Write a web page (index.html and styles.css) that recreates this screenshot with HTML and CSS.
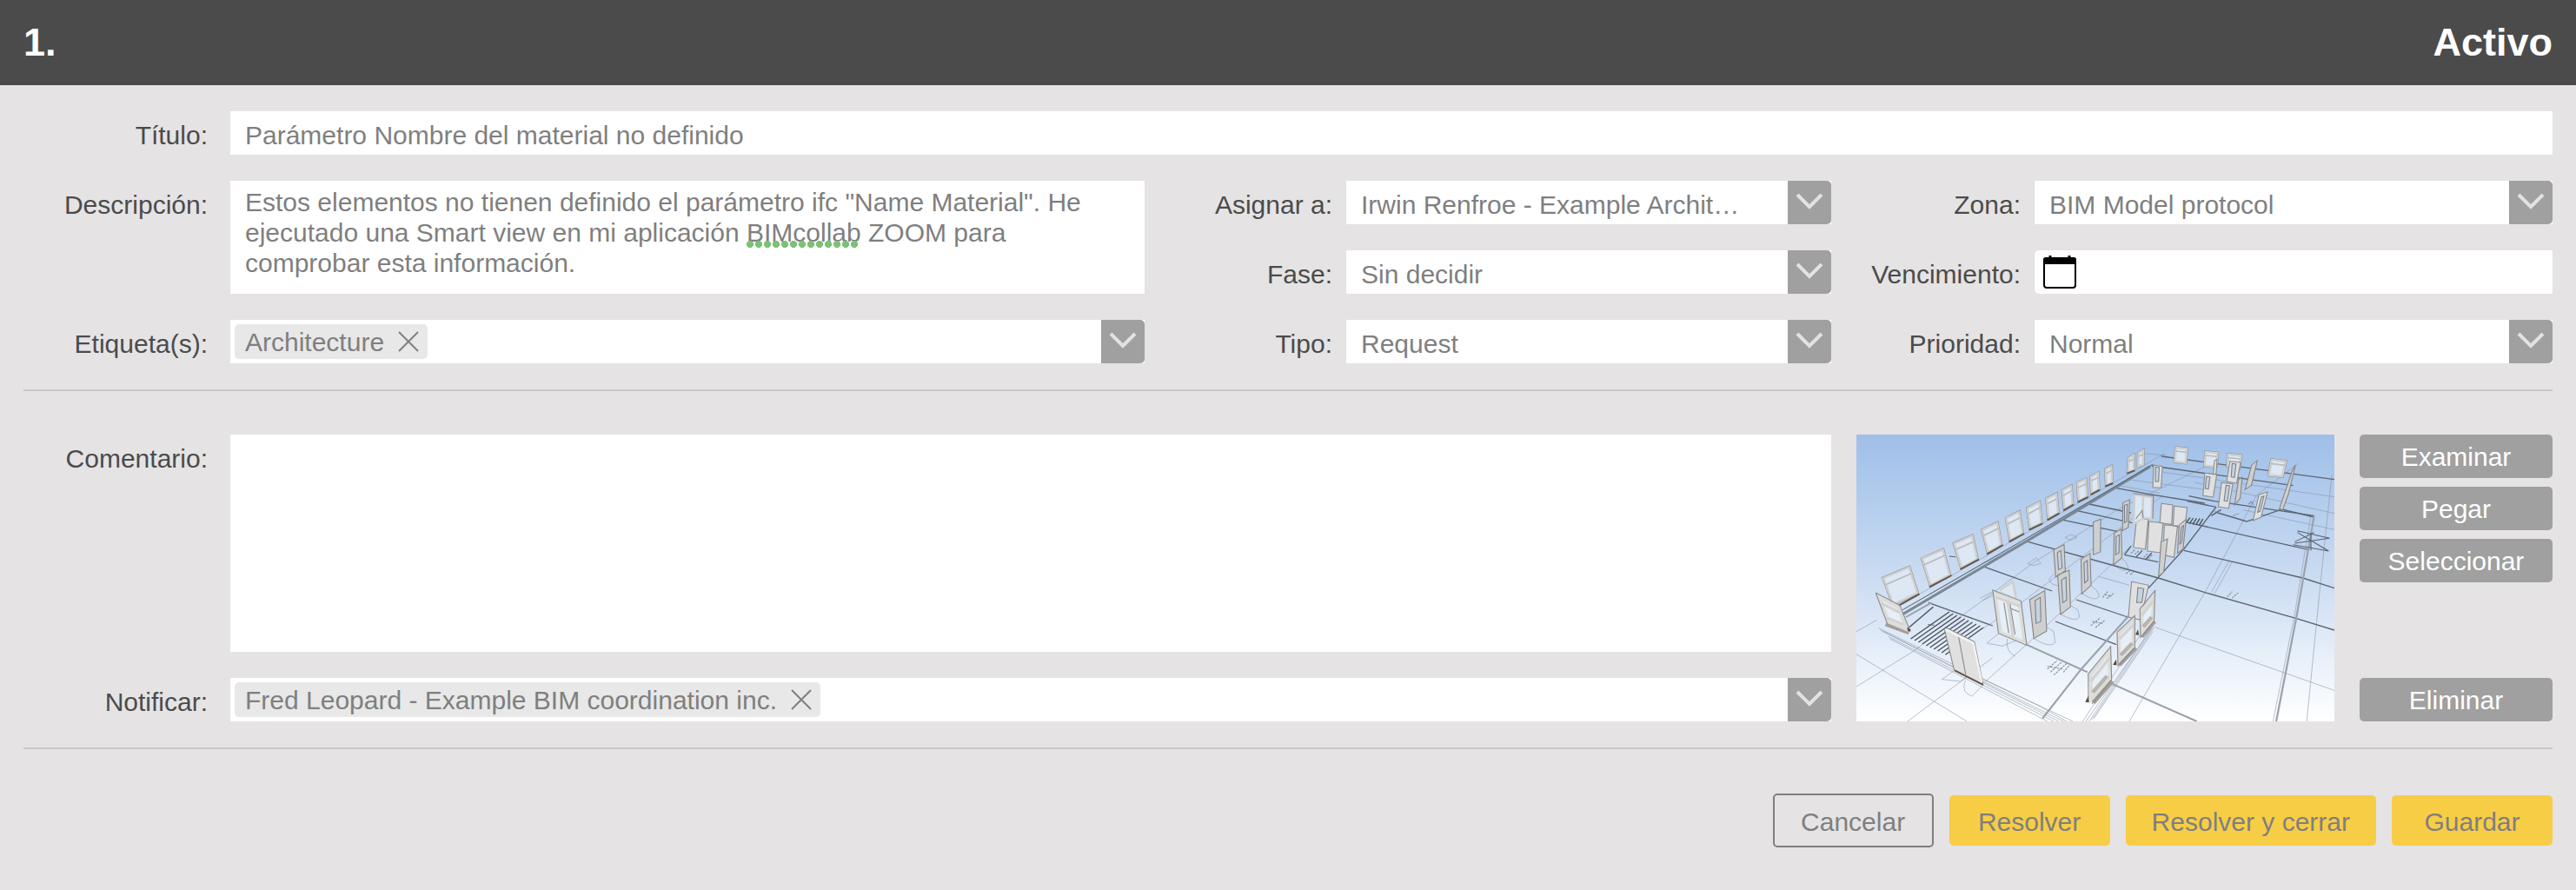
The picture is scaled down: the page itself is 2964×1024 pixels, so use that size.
FILE: index.html
```html
<!DOCTYPE html>
<html lang="es">
<head>
    <meta charset="UTF-8">
    <meta name="viewport" content="width=device-width, initial-scale=1.0">
    <title>Incidencia 1</title>
    <link rel="stylesheet" href="styles.css">
</head>
<body>

<svg class="defs" aria-hidden="true">
    <symbol id="chevron" viewBox="0 0 50 50">
        <path d="M11 16 L25 30 L39 16" fill="none" stroke="#e2e2e2" stroke-width="4"/>
    </symbol>
    <symbol id="cross" viewBox="0 0 24 24">
        <path d="M1 1 L23 23 M23 1 L1 23" fill="none" stroke="#7f7f7f" stroke-width="2"/>
    </symbol>
</svg>

<header class="header">
    <h1>1.</h1>
    <span class="status">Activo</span>
</header>

<form class="issue">
    <div class="fields">
        <label class="label label-first" for="title">Título:</label>
        <input class="input title" type="text" id="title" value="Parámetro Nombre del material no definido">

        <label class="label label-first" for="description">Descripción:</label>
        <div class="description">
            <textarea class="textarea" id="description" spellcheck="false">Estos elementos no tienen definido el parámetro ifc "Name Material". He ejecutado una Smart view en mi aplicación BIMcollab ZOOM para comprobar esta información.</textarea>
            <span class="spelling"></span>
        </div>

        <label class="label" for="assigned">Asignar a:</label>
        <div class="select">
            <select id="assigned"><option>Irwin Renfroe - Example Archit…</option></select>
            <svg class="arrow"><use href="#chevron"/></svg>
        </div>

        <label class="label" for="area">Zona:</label>
        <div class="select">
            <select id="area"><option>BIM Model protocol</option></select>
            <svg class="arrow"><use href="#chevron"/></svg>
        </div>

        <label class="label" for="phase">Fase:</label>
        <div class="select">
            <select id="phase"><option>Sin decidir</option></select>
            <svg class="arrow"><use href="#chevron"/></svg>
        </div>

        <label class="label" for="deadline">Vencimiento:</label>
        <div class="date">
            <button type="button" class="calendar" aria-label="Calendario">
                <svg viewBox="0 0 38 38" width="38" height="38">
                    <path d="M8 0 V4 M30 0 V4" stroke="#000" stroke-width="3"/>
                    <rect x="1" y="3" width="36" height="34" rx="3" fill="#fff" stroke="#000" stroke-width="2"/>
                    <path d="M0 10 V5 Q0 2 3 2 H35 Q38 2 38 5 V10 Z"/>
                </svg>
            </button>
            <input class="input" type="text" id="deadline">
        </div>

        <label class="label label-first" for="tags">Etiqueta(s):</label>
        <div class="tags">
            <span class="tag">Architecture <button type="button" aria-label="Quitar"><svg><use href="#cross"/></svg></button></span>
            <input type="text" id="tags">
            <button type="button" class="open" aria-label="Abrir"><svg class="arrow"><use href="#chevron"/></svg></button>
        </div>

        <label class="label" for="type">Tipo:</label>
        <div class="select">
            <select id="type"><option>Request</option></select>
            <svg class="arrow"><use href="#chevron"/></svg>
        </div>

        <label class="label" for="priority">Prioridad:</label>
        <div class="select">
            <select id="priority"><option>Normal</option></select>
            <svg class="arrow"><use href="#chevron"/></svg>
        </div>
    </div>

    <div class="comment">
        <div class="comment-fields">
            <label class="label label-first" for="comment">Comentario:</label>
            <textarea class="textarea comment-text" id="comment"></textarea>

            <label class="label label-first" for="notify">Notificar:</label>
            <div class="tags">
                <span class="tag">Fred Leopard - Example BIM coordination inc. <button type="button" aria-label="Quitar"><svg><use href="#cross"/></svg></button></span>
                <input type="text" id="notify">
                <button type="button" class="open" aria-label="Abrir"><svg class="arrow"><use href="#chevron"/></svg></button>
            </div>
        </div>

        <svg class="snapshot" viewBox="46 60 1487 990" preserveAspectRatio="none">
            <defs>
                <linearGradient id="sky" x1="0" y1="0" x2="0" y2="1">
                    <stop offset="0" stop-color="#a0bfe7"/>
                    <stop offset="0.12" stop-color="#a9c6eb"/>
                    <stop offset="0.5" stop-color="#cbdcf2"/>
                    <stop offset="0.8" stop-color="#eaf1fa"/>
                    <stop offset="1" stop-color="#fff"/>
                </linearGradient>
                <path id="frames" d="M130 555 L210 518 L236 607 L160 647 Z M251 488 L315 457 L336 544 L277 580 Z M350 436 L406 409 L422 490 L373 519 Z M438 389 L484 365 L496 440 L456 467 Z M513 349 L552 327 L563 401 L525 424 Z M578 315 L615 294 L621 365 L587 383 Z M638 282 L668 265 L673 331 L644 349 Z M688 253 L714 238 L718 300 L694 317 Z M734 227 L759 215 L763 274 L738 289 Z M776 206 L797 193 L800 249 L778 263 Z M822 180 L839 170 L841 226 L824 234 Z M894 141 L908 131 L909 181 L891 190 Z M924 124 L938 115 L938 163 L923 168 Z M1041 105 L1074 109 L1070 158 L1037 153 Z M1133 120 L1169 124 L1165 171 L1130 167 Z M1203 129 L1242 133 L1237 176 L1201 169 Z M1338 147 L1381 153 L1371 204 L1330 200 Z"/>
            </defs>
            <rect x="46" y="60" width="1487" height="990" fill="url(#sky)"/>

            <!-- plano -->
            <g class="plan-light">
                <path d="M46 740 L110 700 M240 612 L1005 125 M46 818 L390 1050 M46 930 L220 810 L430 640 L600 500 L860 318 L1140 165"/>
                <path d="M205 1050 L470 830 M445 915 L575 785 L905 440 M440 730 L560 640 L1000 270"/>
                <path d="M975 725 L1533 943 M1420 160 L1290 270 L1215 430 L1130 605 L895 1050 M1525 200 L1490 570 L1447 1050"/>
                <path d="M1215 500 L1160 610 M1205 497 L1150 605 M800 550 L895 580 M890 215 L1130 250 M860 235 L990 262 M1000 190 L1533 275 M1100 225 L1533 332 M1250 320 L1533 388 M940 125 L1010 132"/>
                <path d="M115 728 L620 1000 L700 1050 M120 735 L690 1050 M130 740 L675 1050 M145 757 L660 1050 M150 765 L640 1050 M440 905 L720 1050"/>
                <path d="M975 710 L770 1050 M965 730 L760 1050 M968 740 L785 1040 M960 700 L750 1050 M972 725 L778 1045"/>
                <path d="M598 764 Q650 800 664 778 L660 740 L635 722 M681 680 Q730 710 740 690 L735 665 L712 650 M747 608 Q790 640 802 618 L795 600 L775 580 M846 510 Q880 540 892 522 L885 500 L870 485"/>
                <path d="M490 745 L452 780 L500 790 L545 770 M515 765 Q510 810 540 825 M350 875 L312 905 L370 912 L400 890 M385 908 Q370 950 405 963 L440 925 M660 540 L645 560 Q650 580 680 583"/>
                <path d="M430 625 L475 600 M440 632 L480 610 M580 505 L605 485 L620 505 L595 512 Z M695 415 L715 405 L733 415 L712 425 Z"/>
            </g>
            <g class="plan">
                <path d="M965 168 L1405 236 M995 135 L1533 215 M855 245 L970 268 L1130 297 M1080 272 L1160 290 L1470 340 M770 300 L900 330 M730 322 L905 365 M690 355 L860 395"/>
                <path d="M580 430 L840 510 L985 555 L1130 605 L1415 695 L1533 735 M1070 362 L1455 458 M1065 460 L1435 555 L1533 590"/>
                <path d="M445 517 L655 600 M730 630 L890 690 M665 705 L855 785 M270 640 L470 720 M880 475 L985 500 M900 445 L880 475 M935 460 L915 485 M965 468 L945 492"/>
                <path d="M1165 310 L1065 455 L955 590 M1170 330 L1260 360 L1370 318 L1470 345 M1075 290 L1165 310 M1150 340 L1180 320"/>
            </g>
            <path class="plan-wide" d="M575 785 L765 880 M840 920 L1105 1050 M950 595 L890 690 L745 870 L625 1040 M280 640 L200 690 M1470 340 L1415 690 L1352 1050"/>
            <path d="M1459 345 L1408 690 L1342 1050" class="plan-light"/>
            <path class="road" d="M960 170 L580 425 L190 680"/>
            <path class="road-edge" d="M968 163 L565 425 L190 665"/>
            <path class="stairs" d="M215 765 L335 672 M227 771 L347 678 M239 777 L359 684 M251 783 L371 690 M263 789 L383 696 M275 795 L395 702 M287 801 L407 708 M299 807 L419 714 M311 813 L431 720 M323 820 L441 726 M200 735 L285 655 M1072 365 L1084 346 M1082 368 L1094 348 M1092 370 L1104 349 M1102 372 L1114 350 M1112 374 L1124 351"/>
            <path class="marks" d="M148 580 L165 592 L180 588 M155 575 L170 580 M268 716 L288 718 M335 480 L355 482 M478 396 L490 400 M585 328 L608 332 M1418 392 L1518 418 L1410 435 M1405 440 L1515 462 L1418 398 M1470 398 L1410 430 M1460 400 L1460 460"/>
            <path class="notes" d="M640 870 L670 840 M650 880 L685 845 M660 890 L700 850 M690 880 L710 855 M640 860 L690 870 M812 622 L828 602 M825 626 L846 608 M818 612 L840 618 M775 720 L805 692 M790 726 L818 702 M780 705 L812 712 M1200 620 L1215 602 M1215 624 L1234 606 M885 540 L900 527 M898 543 L914 530 M900 470 L912 458 M912 474 L926 460 M940 484 L952 472 M954 488 L968 474 M1160 328 L1182 320 M1218 340 L1238 332 M1265 300 L1285 290 M1270 290 L1282 302"/>

            <!-- ventanas de fachada -->
            <use href="#frames" class="frame-edge"/>
            <use href="#frames" class="frame"/>
            <path class="transom" d="M137 578 L216 540 M256 510 L320 478 M355 457 L411 430 M442 409 L487 384 M516 368 L555 347 M581 334 L617 312 M640 299 L669 282 M690 270 L715 254 M736 243 L760 230 M777 220 L798 208 M823 194 L840 184 M894 152 L909 144 M924 136 L938 128 M1040 117 L1073 121 M1132 132 L1168 136 M1202 140 L1240 144 M1336 160 L1378 166"/>
            <path class="sill" d="M178 650 L242 610 M273 586 L342 546 M369 525 L427 491 M452 473 L502 441 M521 430 L568 402 M583 389 L625 367 M640 355 L677 332 M690 322 L722 302 M735 293 L767 276 M775 267 L803 251 M820 239 L844 228 M888 194 L912 184"/>

            <!-- puertas -->
            <g class="door">
                <path d="M971 165 L998 170 L994 244 L968 242 Z M1160 150 L1168 146 L1165 195 L1156 197 Z M1208 152 L1241 156 L1229 228 L1198 222 Z M1130 193 L1167 198 L1156 276 L1124 271 Z M1182 226 L1217 230 L1204 315 L1172 309 Z"/>
                <path d="M995 298 L1030 303 L1027 370 L990 365 Z M1035 307 L1075 312 L1068 382 L1031 375 Z M918 350 L954 353 L945 456 L908 449 Z M956 360 L1000 365 L992 468 L951 462 Z M1004 372 L1045 375 L1034 484 L1000 475 Z"/>
                <path d="M1298 268 L1325 258 L1305 345 L1280 357 Z"/>
            </g>
            <g class="door-dark">
                <path d="M1276 165 L1293 150 L1275 235 L1255 250 Z M1402 185 L1412 165 L1390 265 L1372 320 L1362 316 L1378 262 Z M1235 215 L1246 208 L1240 280 L1222 305 Z M1050 372 L1072 352 L1062 455 L1045 470 Z M994 430 L1014 420 L1002 535 L986 550 Z"/>
                <path d="M875 295 L896 285 L892 380 L874 392 Z M783 362 L806 352 L805 465 L783 475 Z M848 400 L870 386 L872 485 L846 510 Z M745 490 L773 470 L776 580 L747 610 Z M660 458 L692 440 L696 530 L666 552 Z M672 545 L708 528 L712 655 L681 681 Z M585 630 L632 598 L638 738 L598 764 Z"/>
            </g>
            <path class="slot" d="M977 172 L988 174 L986 222 L976 222 Z M1215 160 L1227 162 L1222 208 L1212 206 Z M1135 205 L1146 206 L1141 248 L1131 246 Z M1196 235 L1207 237 L1200 290 L1190 288 Z M1306 275 L1314 272 L1302 325 L1294 328 Z M880 305 L889 300 L887 360 L880 364 Z M854 412 L864 406 L863 468 L853 475 Z M754 502 L764 495 L766 563 L756 572 Z M671 468 L682 460 L686 520 L675 526 Z M684 562 L698 552 L700 632 L688 640 Z M602 633 L618 622 L620 705 L605 712 Z M1057 380 L1064 374 L1058 432 L1052 438 Z"/>

            <path class="frame" d="M911 268 L966 276 L965 350 L942 348 L908 368 Z M938 275 L936 345 M493 597 L533 568 L543 625"/>
            <path class="sill-thin" d="M907 263 L970 272 L968 350 M915 352 L935 322 L938 348"/>
            <path class="pane" d="M476 606 L552 638 L570 778 L494 742 Z"/>
            <path class="frame-line" d="M478 620 L554 652 M516 630 L534 758"/>
            <path class="outline" d="M470 597 L558 634 L576 787 L488 746 Z M526 660 L552 672 M505 640 L520 745 M524 645 L540 750"/>
            <path class="door" d="M320 732 L328 728 L413 775 L440 922 L350 872 Z M364 758 L386 888"/>
            <path class="highlight" d="M322 732 L410 780 L436 915"/>
            <path class="sill" d="M352 874 L440 924"/>

            <path class="sill-grey" d="M138 713 L210 742"/>
            <path class="pane" d="M118 622 L176 656 L203 733 L145 706 Z"/>
            <path class="frame-line" d="M124 642 L180 674 M140 692 L192 716"/>
            <path class="outline" d="M106 606 L181 649 L214 741 M106 606 L142 712"/>
            <path class="block" d="M203 727 L216 733 L208 742 Z M758 983 L768 960 L770 985 Z M844 855 L854 836 L856 856 Z M914 751 L922 732 L925 752 Z"/>

            <path class="door" d="M902 568 L955 580 L930 700 L892 690 Z"/>
            <path class="slot" d="M922 588 L940 592 L934 640 L918 640 Z"/>
            <path class="sill-grey" d="M782 985 L841 910 M862 855 L913 795 M932 757 L972 703"/>
            <path class="pane" d="M773 890 L833 806 L835 900 L778 972 Z M863 747 L908 698 L908 788 L862 842 Z M934 668 L971 614 L968 697 L933 745 Z"/>
            <path class="frame-line" d="M775 912 L834 830 M864 766 L908 716 M934 684 L970 634"/>
            <path class="outline" d="M767 886 L837 792 L840 906 L779 990 M767 886 L768 975 M857 742 L912 685 L912 795 L860 858 Z M928 662 L975 598 L972 703 L930 760 Z"/>
            <path class="inner-sill" d="M781 950 L826 893 M868 822 L904 780 M938 724 L965 690"/>
        </svg>

        <div class="actions">
            <button type="button" class="btn">Examinar</button>
            <button type="button" class="btn">Pegar</button>
            <button type="button" class="btn">Seleccionar</button>
            <button type="button" class="btn btn-delete">Eliminar</button>
        </div>
    </div>

    <div class="footer">
        <button type="button" class="btn-main btn-cancel">Cancelar</button>
        <button type="button" class="btn-main">Resolver</button>
        <button type="button" class="btn-main">Resolver y cerrar</button>
        <button type="submit" class="btn-main">Guardar</button>
    </div>
</form>

</body>
</html>
```

FILE: styles.css
```css
* {
    box-sizing: border-box;
}

body {
    margin: 0;
    background-color: #e5e3e4;
    color: #4b4b4b;
    font-family: "Liberation Sans", Arial, sans-serif;
    font-size: 30px;
    line-height: 35px;
}

input, select, textarea, button {
    margin: 0;
    padding: 0;
    border: none;
    border-radius: 0;
    background: none;
    color: #7f7f7f;
    font: inherit;
    outline: none;
}

button {
    cursor: pointer;
}

.defs {
    display: none;
}

.header {
    display: flex;
    justify-content: space-between;
    align-items: center;
    height: 98px;
    padding: 0 27px 2px;
    background-color: #4b4b4b;
    color: #fff;
    font-size: 45px;
    font-weight: bold;
}

h1 {
    margin: 0;
    font-size: 45px;
}

.issue {
    padding: 0 27px;
}

.fields {
    display: grid;
    grid-template-columns: 238px 1052fr 232px 558fr 234px 596fr;
    grid-auto-rows: 50px;
    row-gap: 30px;
    padding: 30px 0;
    border-bottom: 2px solid #c9c7c8;
}

.label {
    padding: 10px 16px 0 0;
    text-align: right;
}

.label-first {
    grid-column: 1;
    padding-right: 26px;
}

.input {
    width: 100%;
    height: 50px;
    padding: 5px 17px 0;
    background-color: #fff;
}

.title {
    grid-column: 2 / -1;
}

.description {
    position: relative;
    grid-row: span 2;
}

.textarea {
    display: block;
    width: 100%;
    height: 100%;
    padding: 7px 17px;
    background-color: #fff;
    resize: none;
    overflow: hidden;
}

/* subrayado del corrector */
.spelling {
    position: absolute;
    top: 69px;
    left: 594px;
    width: 130px;
    height: 8px;
    background: radial-gradient(circle at 4px 4px, #7cc274 4px, transparent 4px) 0 0 / 10px 8px;
}

.fields .label-first[for="description"] {
    grid-row: 2 / span 2;
}

.select {
    position: relative;
    height: 50px;
    background-color: #fff;
}

.select select {
    width: 100%;
    height: 50px;
    padding: 5px 60px 0 17px;
    appearance: none;
}

.arrow {
    display: block;
    width: 50px;
    height: 50px;
    border-radius: 0 5px 5px 0;
    background-color: #a0a0a0;
}

.select .arrow {
    position: absolute;
    top: 0;
    right: 0;
    pointer-events: none;
}

.date {
    display: flex;
    border-radius: 5px 0 0 5px;
    background-color: #fff;
}

.date .input {
    flex: 1;
    min-width: 0;
}

.calendar {
    flex: none;
    padding: 6px 10px;
}

.calendar svg {
    display: block;
}

.tags {
    display: flex;
    align-items: center;
    height: 50px;
    padding-left: 5px;
    background-color: #fff;
}

.tags input {
    flex: 1;
    min-width: 0;
    height: 50px;
}

.tag {
    display: flex;
    align-items: center;
    gap: 16px;
    height: 40px;
    padding: 0 10px 0 12px;
    border-radius: 5px;
    background-color: #e8e8e8;
    color: #7f7f7f;
    white-space: nowrap;
}

.tag svg {
    display: block;
    width: 24px;
    height: 24px;
}

.comment {
    display: grid;
    grid-template-columns: minmax(0, 1fr) 550px 222px;
    column-gap: 29px;
    padding: 50px 0 30px;
    border-bottom: 2px solid #c9c7c8;
}

.comment-fields {
    display: grid;
    grid-template-columns: 238px 1fr;
    grid-template-rows: 250px 50px;
    row-gap: 30px;
}

.snapshot {
    display: block;
    width: 550px;
    height: 330px;
}

.actions {
    display: flex;
    flex-direction: column;
    gap: 10px;
}

.btn {
    height: 50px;
    border-radius: 5px;
    background-color: #a0a0a0;
    color: #fff;
}

.btn-delete {
    margin-top: auto;
}

.footer {
    display: flex;
    justify-content: flex-end;
    align-items: center;
    gap: 18px;
    padding: 51px 0;
}

.btn-main {
    min-width: 185px;
    height: 58px;
    padding: 2px 30px 0;
    border-radius: 5px;
    background-color: #f7cd46;
}

.btn-cancel {
    height: 62px;
    border: 2px solid #7f7f7f;
    background: none;
}

/* vista del modelo */
.snapshot path, .snapshot g {
    fill: none;
}

.plan-light {
    stroke: #8593a3;
    stroke-width: 2;
    stroke-opacity: 0.8;
}

.plan {
    stroke: #5b6672;
    stroke-width: 4;
}

.plan-wide {
    stroke: #9aa2ab;
    stroke-width: 6;
}

.road {
    stroke: #7b8794;
    stroke-width: 9;
}

.road-edge {
    stroke: #5b6672;
    stroke-width: 3;
}

.stairs {
    stroke: #4e555d;
    stroke-width: 4;
}

.marks {
    stroke: #59626c;
    stroke-width: 3;
}

.notes {
    stroke: #7c8896;
    stroke-width: 3;
    stroke-dasharray: 7 3;
}

.frame-edge {
    stroke: #8f8f8f;
    stroke-width: 10;
}

.snapshot .frame, .snapshot #frames {
    fill: #dde8f4;
}

.frame {
    stroke: #cfcfcf;
    stroke-width: 7;
}

.snapshot .transom {
    stroke: #b9bbbd;
    stroke-width: 5;
}

.sill {
    stroke: #63564c;
    stroke-width: 6;
}

.sill-thin {
    stroke: #85888b;
    stroke-width: 3;
}

.snapshot .door, .snapshot .door path {
    fill: #e0e0e0;
    stroke: #8b8b8b;
    stroke-width: 3;
}

.snapshot .door-dark path {
    fill: #cfcfcf;
    stroke: #858585;
    stroke-width: 3;
}

.snapshot .slot {
    fill: #c6d3e2;
    stroke: #7d8186;
    stroke-width: 3;
}

.snapshot .pane {
    fill: #e6eef6;
    stroke: #dcdcda;
    stroke-width: 11;
}

.frame-line {
    stroke: #d2d2d0;
    stroke-width: 9;
}

.outline {
    stroke: #8c8c8a;
    stroke-width: 3;
}

.highlight {
    stroke: #f4f4f4;
    stroke-width: 6;
}

.sill-grey {
    stroke: #a39d9b;
    stroke-width: 17;
}

.inner-sill {
    stroke: #b9b4ac;
    stroke-width: 12;
}

.snapshot .block {
    fill: #54483c;
}
```
